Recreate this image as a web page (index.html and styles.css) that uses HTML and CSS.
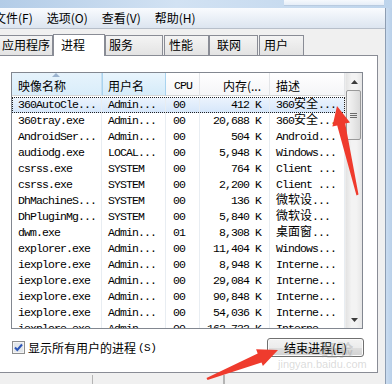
FILE: index.html
```html
<!DOCTYPE html>
<html lang="zh-CN">
  <head>
    <meta charset="UTF-8" />
    <meta name="viewport" content="width=device-width, initial-scale=1.0" />
    <title>Windows 任务管理器</title>
    <link rel="stylesheet" href="styles.css">
  </head>
  <body>
    <div class="titlebar"><div class="titlebar-glass"></div></div>
    <div class="window">
      <div class="client">
        <div class="menubar">
          <span class="menu-item">文件(F)</span>
          <span class="menu-item">选项(O)</span>
          <span class="menu-item">查看(V)</span>
          <span class="menu-item">帮助(H)</span>
        </div>

        <div class="tabs">
          <div class="tab tab-apps">应用程序</div>
          <div class="tab tab-active">进程</div>
          <div class="tab tab-services">服务</div>
          <div class="tab tab-perf">性能</div>
          <div class="tab tab-net">联网</div>
          <div class="tab tab-users">用户</div>
        </div>

        <div class="panel">
          <div class="list">
            <div class="list-main">
              <div class="list-head">
                <div class="head-cell sorted">映像名称</div>
                <div class="head-cell hot">用户名</div>
                <div class="head-cell cpu">CPU</div>
                <div class="head-cell num">内存(...</div>
                <div class="head-cell">描述</div>
              </div>
              <div class="list-body">
                <div class="row selected">
                  <span>360AutoCle...</span><span>Admin...</span><span class="cpu">00</span><span class="num">412 K</span><span>360<i>安全</i>...</span>
                </div>
                <div class="row">
                  <span>360tray.exe</span><span>Admin...</span><span class="cpu">00</span><span class="num">20,688 K</span><span>360<i>安全</i>...</span>
                </div>
                <div class="row">
                  <span>AndroidSer...</span><span>Admin...</span><span class="cpu">00</span><span class="num">504 K</span><span>Android...</span>
                </div>
                <div class="row">
                  <span>audiodg.exe</span><span>LOCAL...</span><span class="cpu">00</span><span class="num">5,948 K</span><span>Windows...</span>
                </div>
                <div class="row">
                  <span>csrss.exe</span><span>SYSTEM</span><span class="cpu">00</span><span class="num">764 K</span><span>Client ...</span>
                </div>
                <div class="row">
                  <span>csrss.exe</span><span>SYSTEM</span><span class="cpu">00</span><span class="num">2,200 K</span><span>Client ...</span>
                </div>
                <div class="row">
                  <span>DhMachineS...</span><span>SYSTEM</span><span class="cpu">00</span><span class="num">136 K</span><span><i>微软设</i>...</span>
                </div>
                <div class="row">
                  <span>DhPluginMg...</span><span>SYSTEM</span><span class="cpu">00</span><span class="num">5,840 K</span><span><i>微软设</i>...</span>
                </div>
                <div class="row">
                  <span>dwm.exe</span><span>Admin...</span><span class="cpu">01</span><span class="num">8,308 K</span><span><i>桌面窗</i>...</span>
                </div>
                <div class="row">
                  <span>explorer.exe</span><span>Admin...</span><span class="cpu">00</span><span class="num">11,404 K</span><span>Windows...</span>
                </div>
                <div class="row">
                  <span>iexplore.exe</span><span>Admin...</span><span class="cpu">00</span><span class="num">8,948 K</span><span>Interne...</span>
                </div>
                <div class="row">
                  <span>iexplore.exe</span><span>Admin...</span><span class="cpu">00</span><span class="num">29,084 K</span><span>Interne...</span>
                </div>
                <div class="row">
                  <span>iexplore.exe</span><span>Admin...</span><span class="cpu">00</span><span class="num">90,848 K</span><span>Interne...</span>
                </div>
                <div class="row">
                  <span>iexplore.exe</span><span>Admin...</span><span class="cpu">00</span><span class="num">54,036 K</span><span>Interne...</span>
                </div>
                <div class="row">
                  <span>iexplore.exe</span><span>Admin...</span><span class="cpu">00</span><span class="num">162,732 K</span><span>Interne...</span>
                </div>
              </div>
            </div>
            <div class="scrollbar">
              <div class="sb-btn">
                <svg width="7" height="4" viewBox="0 0 7 4"><path d="M3.5 0 L7 4 L0 4 Z" fill="#3c3c3c"/></svg>
              </div>
              <div class="sb-thumb">
                <svg width="7" height="5" viewBox="0 0 7 5"><path d="M0 0.5 H7 M0 2.5 H7 M0 4.5 H7" stroke="#6b6b6b" stroke-width="1"/></svg>
              </div>
              <div class="sb-track"></div>
              <div class="sb-btn">
                <svg width="7" height="4" viewBox="0 0 7 4"><path d="M0 0 L7 0 L3.5 4 Z" fill="#3c3c3c"/></svg>
              </div>
            </div>
          </div>

          <div class="panel-foot">
            <label class="check">
              <svg class="checkbox" width="13" height="13" viewBox="0 0 13 13">
                <rect x="0.5" y="0.5" width="12" height="12" fill="#f4f4f4" stroke="#8e8f8f"/>
                <rect x="2" y="2" width="9" height="9" fill="#e2e6ea"/>
                <path d="M3 6.5 L5.3 9 L10 3.5" fill="none" stroke="#2c55b8" stroke-width="2"/>
              </svg>
              <span>显示所有用户的进程</span><span class="mnemonic">(S)</span>
            </label>
            <button class="btn">结束进程(E)</button>
          </div>
        </div>

        <div class="statusbar">
          <div class="status-cell status-first"></div>
          <div class="status-cell status-second"></div>
          <div class="status-cell"></div>
        </div>
      </div>
      <div class="frame-right"></div>
    </div>

    <div class="watermark">
      <span class="wm-logo">经验</span>
      <span class="wm-url">jingyan.baidu.com</span>
    </div>

    <svg class="annotations" width="392" height="384" viewBox="0 0 392 384">
      <polygon fill="#ef3b2d" points="337,106 350,122.5 345.2,123.6 358.5,194.5 356.5,195.5 337.2,125.4 332.4,126.5"/>
      <polygon fill="#ef3b2d" points="278,350 262.9,365.9 261.5,362.5 207.5,380 206.5,378 257.7,353.6 256.1,349.3"/>
    </svg>
  </body>
</html>
```

FILE: styles.css
```css
*,
::before,
::after {
  box-sizing: border-box;
}

body {
  margin: 0;
  width: 392px;
  height: 384px;
  overflow: hidden;
  position: relative;
  background-color: #f0f0f0;
  font-family: "Noto Sans CJK SC", "Liberation Sans", sans-serif;
  font-size: 12px;
  color: #000;
}

/* window frame */
.titlebar {
  display: flex;
  height: 8px;
  background: linear-gradient(90deg, #b3cce7 0%, #d2e2f3 45%, #bdd4ec 100%);
}

.titlebar-glass {
  margin-left: auto;
  margin-right: 8px;
  width: 100px;
  height: 6px;
  background: linear-gradient(#f6f9fd, #e6eef8);
  border-bottom: 1px solid #b9cbe0;
}

.window {
  display: flex;
  height: 376px;
}

.client {
  width: 386px;
  display: flex;
  flex-direction: column;
  border-right: 1px solid #8d9db2;
}

.frame-right {
  flex: 1;
  background: linear-gradient(90deg, #cadcf0, #b9d0e9);
}

/* menu */
.menubar {
  display: flex;
  align-items: center;
  height: 21px;
  flex: none;
  background: linear-gradient(#f9fbfe, #dce5f0);
  border-bottom: 1px solid #b7bfca;
}

.menu-item {
  padding: 0 7px;
  line-height: 20px;
  white-space: nowrap;
}

.menu-item:first-child {
  margin-left: -13px;
}

/* tabs */
.tabs {
  display: flex;
  align-items: flex-end;
  height: 26px;
  flex: none;
  margin-left: -4px;
}

.tab {
  height: 20px;
  border: 1px solid #898c95;
  border-bottom: none;
  background: linear-gradient(#f4f4f4, #e3e3e3);
  padding-left: 5px;
  line-height: 18px;
  white-space: nowrap;
}

.tab-apps {
  width: 57px;
}

.tab-active {
  position: relative;
  z-index: 1;
  width: 52px;
  height: 22px;
  margin-bottom: -1px;
  padding-left: 7px;
  background: #fff;
  line-height: 19px;
}

.tab-services {
  width: 58px;
  padding-left: 3px;
}

.tab-perf {
  width: 45px;
  margin-left: 1px;
  padding-left: 4px;
}

.tab-net {
  width: 49px;
  padding-left: 7px;
}

.tab-users {
  width: 45px;
  margin-left: 1px;
  padding-left: 4px;
}

/* tab page */
.panel {
  flex: none;
  height: 318px;
  margin-right: 7px;
  background: #fff;
  border: 1px solid #898c95;
  border-left: none;
  padding: 16px 14px 0 11px;
}

.list {
  display: flex;
  height: 257px;
  border: 1px solid #828790;
  overflow: hidden;
}

.list-main {
  width: 333px;
  display: flex;
  flex-direction: column;
}

.list-head,
.row {
  display: grid;
  grid-template-columns: 90px 64px 34px 70px 75px;
}

.list-head {
  height: 23px;
  flex: none;
}

.head-cell {
  position: relative;
  padding: 3px 6px 0;
  line-height: 19px;
  white-space: nowrap;
  background: linear-gradient(#ffffff, #f4f5f7);
  border-right: 1px solid #e3e5e8;
  border-bottom: 1px solid #d5d5d5;
}

.head-cell.sorted {
  background: linear-gradient(#e6f3fc, #d9edfa);
  border-right-color: #c5dff2;
}

.head-cell.sorted::before {
  content: "";
  position: absolute;
  left: 40px;
  top: 0;
  border-left: 4px solid transparent;
  border-right: 4px solid transparent;
  border-bottom: 4px solid #9bb3cf;
}

.head-cell.hot {
  background: linear-gradient(#e9f5fd, #d5ebf9);
  border-left: 1px solid #a9d3ef;
  border-right: 1px solid #a9d3ef;
  padding-left: 5px;
}

.head-cell.cpu {
  padding-left: 8px;
  font-family: "Liberation Mono", monospace;
  font-size: 11.5px;
  letter-spacing: -0.9px;
}

.head-cell.num {
  text-align: right;
  padding-right: 8px;
}

.list-body {
  flex: 1;
  padding-top: 1px;
  overflow: hidden;
  font-family: "Liberation Mono", "Noto Sans CJK SC", monospace;
  font-size: 11.5px;
  letter-spacing: -0.9px;
}

.row {
  height: 16px;
  line-height: 16px;
}

.row span {
  padding: 0 6px;
  white-space: nowrap;
  overflow: hidden;
  border-right: 1px solid #e8edf2;
}

.row span.cpu {
  padding-left: 7px;
}

.row span.num {
  text-align: right;
  padding-right: 8px;
}

.row i {
  font-style: normal;
  font-family: "Noto Sans CJK SC", sans-serif;
  font-size: 12px;
  line-height: 0;
  letter-spacing: 0;
}

.row.selected {
  background: linear-gradient(#edf4fd, #d5e6fa);
  outline: 1px dotted #222;
  outline-offset: -1px;
}

/* scrollbar */
.scrollbar {
  width: 17px;
  display: flex;
  flex-direction: column;
  background: linear-gradient(90deg, #e3e3e3, #f3f3f3 35%, #f3f3f3 65%, #e6e6e6);
  border-left: 1px solid #ececec;
}

.sb-btn {
  height: 17px;
  flex: none;
  display: flex;
  align-items: center;
  justify-content: center;
}

.sb-thumb {
  height: 50px;
  flex: none;
  margin: 0 1px 0 0;
  display: flex;
  align-items: center;
  justify-content: center;
  border: 1px solid #999;
  border-radius: 2px;
  background: linear-gradient(90deg, #f5f5f5, #e8e8e8 50%, #d9d9d9);
}

.sb-track {
  flex: 1;
}

/* bottom of the page */
.panel-foot {
  display: flex;
  justify-content: space-between;
  align-items: center;
  height: 19px;
  margin-top: 9px;
}

.check {
  display: flex;
  align-items: center;
  padding-left: 1px;
}

.checkbox {
  margin-right: 3px;
}

.mnemonic {
  margin-left: 2px;
  font-family: "Liberation Mono", monospace;
  font-size: 11px;
  letter-spacing: -0.5px;
}

.btn {
  width: 97px;
  height: 19px;
  margin-right: -1px;
  padding: 0;
  font: inherit;
  color: #000;
  border: 1px solid #707070;
  border-radius: 3px;
  background: linear-gradient(#f3f3f3 0%, #ececec 50%, #dedede 51%, #d2d2d2 100%);
  box-shadow: inset 0 0 0 1px #fbfbfb;
}

.statusbar {
  display: flex;
  flex: none;
  height: 20px;
  padding-top: 2px;
}

.status-cell {
  border-right: 1px solid #b4b4b4;
}

.status-first {
  width: 93px;
}

.status-second {
  width: 131px;
}

/* overlays: baidu watermark and red arrows */
.watermark {
  position: absolute;
  left: 278px;
  top: 340px;
  display: flex;
  flex-direction: column;
  align-items: center;
  color: rgba(150, 150, 150, 0.35);
  pointer-events: none;
}

.wm-logo {
  margin-left: 30px;
  font-size: 16px;
  font-weight: bold;
  line-height: 18px;
}

.wm-url {
  font-family: "Liberation Sans", sans-serif;
  font-size: 11px;
  line-height: 13px;
}

.annotations {
  position: absolute;
  left: 0;
  top: 0;
  pointer-events: none;
}
```
